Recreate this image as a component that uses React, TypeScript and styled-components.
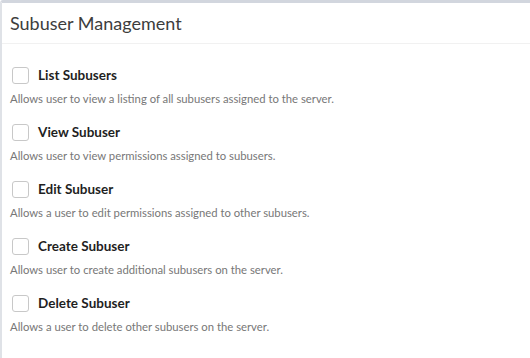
import styled, { createGlobalStyle } from "styled-components";

const GlobalStyle = createGlobalStyle`
  html, body {
    margin: 0;
    padding: 0;
    background: #ffffff;
  }
  body {
    font-family: Lato, "Open Sans", sans-serif;
  }
`;

const Box = styled.section`
  background: #ffffff;
  border-top: 3px solid #d2d6de;
  border-left: 2px solid #dfe2e7;
  border-top-left-radius: 3px;
  min-height: 355px;
`;

const BoxHeader = styled.header`
  padding: 10px 8px;
  border-bottom: 1px solid #f1f1f1;
`;

const BoxTitle = styled.h3`
  margin: 0;
  font-size: 18px;
  line-height: 20px;
  font-weight: 400;
  color: #3d3d3d;
`;

const BoxBody = styled.div`
  display: flex;
  flex-direction: column;
  gap: 15px;
  padding: 21px 8px 10px;
`;

const Permission = styled.div`
  display: flex;
  flex-direction: column;
  gap: 6px;
`;

const CheckRow = styled.label`
  display: flex;
  align-items: center;
  gap: 9px;
  height: 20px;
  padding-left: 2px;
  cursor: pointer;
`;

const CheckBox = styled.span`
  width: 15px;
  height: 15px;
  border: 1px solid #c8c8c8;
  border-radius: 3px;
  background: #ffffff;
  box-sizing: content-box;
`;

const Name = styled.span`
  font-size: 13.5px;
  font-weight: 700;
  color: #1f1f1f;
`;

const Help = styled.p`
  margin: 0;
  font-size: 11.3px;
  line-height: 16px;
  color: #777777;
`;

const permissions = [
  { name: "List Subusers", help: "Allows user to view a listing of all subusers assigned to the server." },
  { name: "View Subuser", help: "Allows user to view permissions assigned to subusers." },
  { name: "Edit Subuser", help: "Allows a user to edit permissions assigned to other subusers." },
  { name: "Create Subuser", help: "Allows user to create additional subusers on the server." },
  { name: "Delete Subuser", help: "Allows a user to delete other subusers on the server." },
];

export default function App() {
  return (
    <>
      <GlobalStyle />
      <Box>
        <BoxHeader>
          <BoxTitle>Subuser Management</BoxTitle>
        </BoxHeader>
        <BoxBody>
          {permissions.map((p) => (
            <Permission key={p.name}>
              <CheckRow>
                <CheckBox />
                <Name>{p.name}</Name>
              </CheckRow>
              <Help>{p.help}</Help>
            </Permission>
          ))}
        </BoxBody>
      </Box>
    </>
  );
}
